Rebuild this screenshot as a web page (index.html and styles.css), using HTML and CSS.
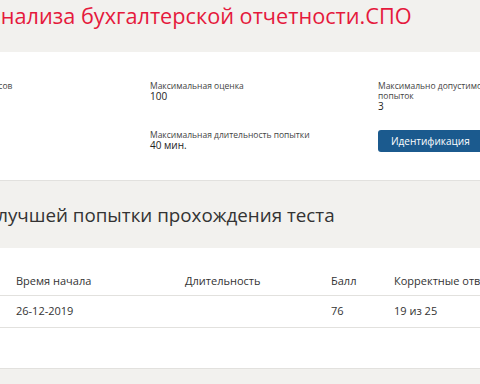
FILE: index.html
```html
<!DOCTYPE html>
<html lang="ru">
<head>
    <meta charset="UTF-8">
    <meta name="viewport" content="width=device-width, initial-scale=1.0">
    <title>Основы анализа бухгалтерской отчетности.СПО</title>
    <link rel="stylesheet" href="styles.css">
</head>
<body>
    <header class="test-head">
        <div class="page">
            <h1 class="test-title">Основы анализа бухгалтерской отчетности.СПО</h1>
        </div>
    </header>

    <section class="test-info">
        <div class="page info-grid">
            <div class="info-item">
                <div class="info-label">Количество вопросов</div>
                <div class="info-value">25</div>
            </div>
            <div class="info-item">
                <div class="info-label">Максимальная оценка</div>
                <div class="info-value">100</div>
            </div>
            <div class="info-item">
                <div class="info-label info-label-wrap">Максимально допустимое количество попыток</div>
                <div class="info-value">3</div>
            </div>
            <div class="info-item"></div>
            <div class="info-item">
                <div class="info-label">Максимальная длительность попытки</div>
                <div class="info-value">40 мин.</div>
            </div>
            <div class="info-item">
                <button class="btn-ident">Идентификация</button>
            </div>
        </div>
    </section>

    <section class="band">
        <div class="page">
            <h2 class="band-title">Результат лучшей попытки прохождения теста</h2>
        </div>
    </section>

    <section class="results">
        <div class="page">
            <table class="results-table">
                <thead>
                    <tr>
                        <th class="col-num">Попытка</th>
                        <th class="col-start">Время начала</th>
                        <th class="col-len">Длительность</th>
                        <th class="col-score">Балл</th>
                        <th>Корректные ответы</th>
                    </tr>
                </thead>
                <tbody>
                    <tr>
                        <td class="col-num">1</td>
                        <td class="col-start">26-12-2019</td>
                        <td class="col-len"></td>
                        <td class="col-score">76</td>
                        <td>19 из 25</td>
                    </tr>
                </tbody>
            </table>
        </div>
    </section>

    <section class="band band-bottom"></section>
</body>
</html>
```

FILE: styles.css
```css
:root {
    --band-bg: #f2f1ee;
    --line: #e2e1de;
    --title-red: #e5193c;
    --text: #333333;
    --btn-blue: #1b5a8e;
}

body {
    margin: 0;
    overflow: hidden;
    background: #fff;
    font-family: "Open Sans", "Noto Sans", sans-serif;
    color: var(--text);
}

.page {
    margin-left: -98px;
    width: 760px;
}

.test-head {
    background: var(--band-bg);
    height: 52px;
}

.test-title {
    margin: 0 0 0 -2px;
    font-size: 21.7px;
    font-weight: 400;
    line-height: 32px;
    color: var(--title-red);
}

.test-info {
    padding: 29px 0 28px;
    border-bottom: 1px solid var(--line);
}

.info-grid {
    display: grid;
    grid-template-columns: repeat(3, 228px);
    padding-left: 20px;
    row-gap: 18px;
}

.info-label {
    font-size: 8.5px;
    line-height: 10px;
    color: #444;
}

.info-label-wrap {
    width: 160px;
}

.info-value {
    font-size: 10px;
    line-height: 11px;
    color: #222;
}

.btn-ident {
    display: block;
    height: 22px;
    padding: 0 13px;
    border: none;
    border-radius: 3px;
    background: var(--btn-blue);
    color: #fff;
    font-family: inherit;
    font-size: 10px;
}

.band {
    background: var(--band-bg);
    height: 67px;
}

.band-title {
    margin: 0;
    padding-top: 22px;
    font-size: 18.8px;
    font-weight: 400;
    line-height: 24px;
    color: var(--text);
}

.results {
    padding: 19px 0 40px;
    border-bottom: 1px solid var(--line);
}

.results-table {
    border-collapse: collapse;
    table-layout: fixed;
    width: 600px;
    font-size: 11px;
}

.results-table th,
.results-table td {
    text-align: left;
    font-weight: 400;
    padding: 8px;
    line-height: 12px;
    border-bottom: 1px solid var(--line);
    white-space: nowrap;
}

.results-table td {
    padding: 9px 8px 10px;
}

.col-num { width: 90px; }
.col-start { width: 153px; }
.col-len { width: 130px; }
.col-score { width: 47px; }

.band-bottom {
    height: 15px;
}
```
